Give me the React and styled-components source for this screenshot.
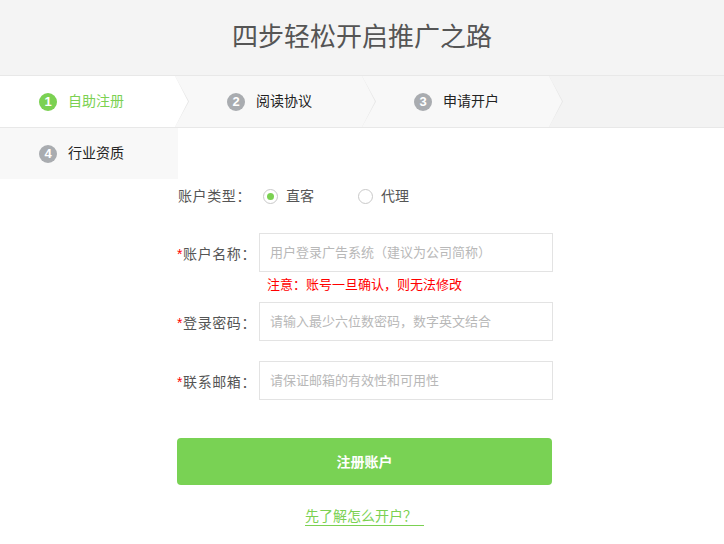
import React, { useState } from "react";
import styled, { createGlobalStyle } from "styled-components";

const GlobalStyle = createGlobalStyle`
	html, body {
		margin: 0;
		padding: 0;
		background: #fff;
		font-family: "Microsoft YaHei", "Noto Sans CJK SC", sans-serif;
	}
	* {
		box-sizing: border-box;
	}
`;

const steps = [
	{ no: 1, name: "自助注册" },
	{ no: 2, name: "阅读协议" },
	{ no: 3, name: "申请开户" },
	{ no: 4, name: "行业资质" },
];

function App() {
	const [type, setType] = useState("direct");

	return (
		<PageC>
			<GlobalStyle />
			<TitleBarC>四步轻松开启推广之路</TitleBarC>
			<StepsAreaC>
				<StepsC>
					{steps.map((s, i) => (
						<StepC key={s.no} $active={i === 0} $first={i === 0} $wrapped={i === 3}>
							<StepNoC $active={i === 0}>{s.no}</StepNoC>
							<StepNameC $active={i === 0}>{s.name}</StepNameC>
						</StepC>
					))}
				</StepsC>
			</StepsAreaC>

			<FormC>
				<TypeRowC>
					<LabelC>账户类型：</LabelC>
					<RadioGroupC>
						<RadioC onClick={() => setType("direct")}>
							<RadioDotC $checked={type === "direct"} />
							直客
						</RadioC>
						<RadioC onClick={() => setType("agent")}>
							<RadioDotC $checked={type === "agent"} />
							代理
						</RadioC>
					</RadioGroupC>
				</TypeRowC>

				<FieldRowC $gap={19}>
					<LabelC>
						<StarC>*</StarC>账户名称：
					</LabelC>
					<InputC placeholder="用户登录广告系统（建议为公司简称）" />
				</FieldRowC>
				<NoteC>注意：账号一旦确认，则无法修改</NoteC>

				<FieldRowC $gap={4}>
					<LabelC>
						<StarC>*</StarC>登录密码：
					</LabelC>
					<InputC type="password" placeholder="请输入最少六位数密码，数字英文结合" />
				</FieldRowC>

				<FieldRowC $gap={20}>
					<LabelC>
						<StarC>*</StarC>联系邮箱：
					</LabelC>
					<InputC placeholder="请保证邮箱的有效性和可用性" />
				</FieldRowC>

				<SubmitC>注册账户</SubmitC>
				<HelpC>
					<a href="#">先了解怎么开户？</a>
				</HelpC>
			</FormC>
		</PageC>
	);
}

const PageC = styled.div`
	width: 724px;
	min-height: 544px;
	background: #fff;
`;

const TitleBarC = styled.div`
	height: 75px;
	background: #f4f4f4;
	display: flex;
	align-items: center;
	justify-content: center;
	font-size: 26px;
	color: #555;
	padding-bottom: 7px;
`;

// the bar is one step tall; the 4th step wraps below it onto the page
const StepsAreaC = styled.div`
	height: 103px;
`;

const StepsC = styled.div`
	height: 53px;
	display: flex;
	flex-wrap: wrap;
	align-content: flex-start;
	background: #f3f3f3;
	border-top: 1px solid #e8e8e8;
	border-bottom: 1px solid #e8e8e8;
`;

const StepC = styled.div`
	position: relative;
	flex: 0 0 ${(p) => (p.$first ? 175 : p.$wrapped ? 178 : 187)}px;
	height: 51px;
	margin-top: ${(p) => (p.$wrapped ? 1 : 0)}px;
	display: flex;
	align-items: center;
	padding-left: ${(p) => (p.$first || p.$wrapped ? 39 : 52)}px;
	padding-bottom: 3px;
	background: ${(p) => (p.$active ? "#fff" : "#f8f8f8")};

	${(p) =>
		!p.$wrapped &&
		`
	&::before,
	&::after {
		content: "";
		position: absolute;
		top: 0;
		left: 100%;
		height: 100%;
		clip-path: polygon(0 0, 100% 50%, 0 100%);
		z-index: 1;
	}
	&::before {
		width: 14px;
		background: #e6e6e6;
	}
	&::after {
		width: 13px;
		background: ${p.$active ? "#fff" : "#f8f8f8"};
	}
	`}
`;

const StepNoC = styled.span`
	width: 18px;
	height: 18px;
	border-radius: 50%;
	background: ${(p) => (p.$active ? "#7bd152" : "#a9acb0")};
	color: #fff;
	font-family: Arial, "Liberation Sans", sans-serif;
	font-weight: bold;
	font-size: 13px;
	display: flex;
	align-items: center;
	justify-content: center;
	margin-right: 11px;
	margin-top: 3px;
	flex-shrink: 0;
`;

const StepNameC = styled.span`
	font-size: 14px;
	color: ${(p) => (p.$active ? "#7bd152" : "#222")};
`;

const FormC = styled.div`
	width: 382px;
	margin: 0 auto;
	padding-left: 6px;
`;

const LabelC = styled.div`
	width: 74px;
	flex-shrink: 0;
	margin-right: 8px;
	text-align: right;
	font-size: 14px;
	letter-spacing: 0.6px;
	color: #555;
	white-space: nowrap;
`;

const StarC = styled.span`
	color: #f00;
	font-size: 14px;
	font-family: Arial, "Liberation Sans", sans-serif;
`;

const TypeRowC = styled.div`
	height: 36px;
	display: flex;
	align-items: center;
	padding-bottom: 2px;
`;

const RadioGroupC = styled.div`
	display: flex;
	align-items: center;
	padding-left: 4px;
`;

const RadioC = styled.label`
	display: flex;
	align-items: center;
	font-size: 14px;
	color: #555;
	width: 95px;
	cursor: pointer;
`;

const RadioDotC = styled.span`
	width: 15px;
	height: 15px;
	border-radius: 50%;
	border: 1px solid #c9c9c9;
	margin-right: 8px;
	margin-top: 2px;
	display: flex;
	align-items: center;
	justify-content: center;
	&::after {
		content: "";
		width: 7px;
		height: 7px;
		border-radius: 50%;
		background: ${(p) => (p.$checked ? "#7bd152" : "transparent")};
	}
`;

const FieldRowC = styled.div`
	display: flex;
	align-items: center;
	margin-top: ${(p) => p.$gap}px;
`;

const InputC = styled.input`
	width: 294px;
	height: 39px;
	border: 1px solid #e3e3e3;
	padding: 0 10px 2px;
	font-size: 13px;
	font-family: "Microsoft YaHei", "Noto Sans CJK SC", sans-serif;
	color: #333;
	outline: none;
	&::placeholder {
		color: #b8b8b8;
	}
`;

const NoteC = styled.div`
	margin-left: 90px;
	height: 26px;
	line-height: 24px;
	font-size: 13px;
	color: #f00;
`;

const SubmitC = styled.button`
	display: block;
	width: 375px;
	height: 47px;
	margin-top: 38px;
	border: none;
	border-radius: 4px;
	background: #79d254;
	color: #fff;
	font-size: 14px;
	font-weight: bold;
	font-family: "Microsoft YaHei", "Noto Sans CJK SC", sans-serif;
	cursor: pointer;
	padding-bottom: 3px;
`;

const HelpC = styled.div`
	margin-top: 15px;
	width: 375px;
	text-align: center;
	line-height: 28px;
	& a {
		font-size: 14px;
		color: #7bd152;
		text-decoration: none;
		border-bottom: 1px solid #7bd152;
		padding-right: 7px;
	}
`;

export default App;
